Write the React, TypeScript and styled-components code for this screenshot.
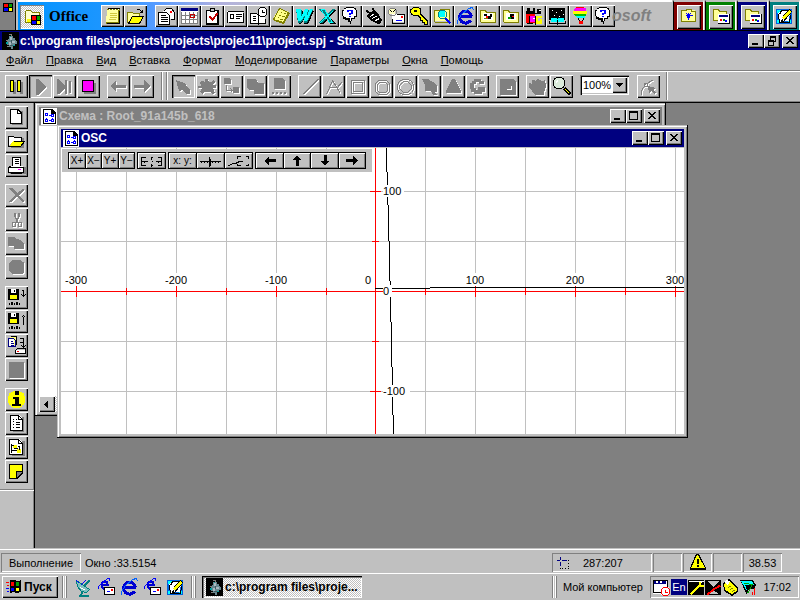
import React from "react";
import styled, { createGlobalStyle, css } from "styled-components";

/* ---------- theme ---------- */
const face = "#c0c0c0";
const shade = "#808080";
const navy = "#000080";
const sans = `"Liberation Sans", Arial, sans-serif`;

const raised = css`
  box-shadow: inset 1px 1px #fff, inset -1px -1px #000, inset -2px -2px ${shade};
`;
const sunken = css`
  box-shadow: inset 1px 1px ${shade}, inset -1px -1px #fff;
`;
const dither = css`
  background: conic-gradient(#fff 25%, ${face} 0 50%, #fff 0 75%, ${face} 0) 0 0 / 2px 2px;
`;

const Global = createGlobalStyle`
  * { box-sizing: border-box; }
  body { margin: 0; font: 11px/14px ${sans}; color: #000; background: ${face}; overflow: hidden; }
  button, select { font: inherit; color: inherit; border: 0; margin: 0; padding: 0; border-radius: 0; }
  svg { display: block; flex: none; shape-rendering: crispEdges; }
`;

/* ---------- icon drawings: [kind, colour, path]; f = fill, s / w / b = 1, 2, 3 px stroke ---------- */
type Part = ["f" | "s" | "w" | "b", string, string];
const strokeWidths = { f: 0, s: 1, w: 2, b: 3 };
const Y = "#ffff00";
const K = "#000000";
const W = "#ffffff";
const G = "#808080";
const B = "#0000ff";
const C = "#00ffff";
const R = "#ff0000";
const T = "#008080";
const O = "#808000";

const folder: Part[] = [
  ["f", "#ffff99", "M2 2h5l1 2h7v10H2z"],
  ["s", O, "M2 2h5l1 2h7v9H2z"],
];
const bubble: Part[] = [
  ["f", K, "M5 0h8v1h2v2h1v7h-2v2h-3v2h-1v3H9v-2H7v-2H4v-1H2V9H1V3h2V1h2z"],
  ["f", W, "M5 1h8v1h1v1h1v6h-2v2h-3v3H9v-3H5v-1H3V9H2V4h1V2h2z"],
  ["f", B, "M6 3h6v4h-2v1H8V6h2V4H8v1H6zM8 9h2v1H8z"],
];
const ie: Part[] = [
  ["b", "#0000d0", "M15 9A6 6 0 1 0 14 13M4 9h11"],
  ["s", "#0060ff", "M1 16V13L5 7L12 1L16 0L17 3"],
];
const winDoc: Part[] = [
  ["f", K, "M2 1h9l4 4v11H2z"],
  ["f", W, "M3 2h7v4h4v9H3z"],
  ["s", B, "M4 5h2v2H4zM10 6h2v2h-2zM4 11h2v2H4zM10 11h2v2h-2zM7 7h2M7 12h2M5 9v1M11 9v1"],
];
const disk: Part[] = [
  ["f", K, "M1 1h11v11H1z"],
  ["f", W, "M4 1h5v4H4z"],
  ["f", K, "M7 2h1v2H7z"],
  ["f", Y, "M3 7h7v4H3z"],
  ["s", K, "M2 14v2M4 14h1v2H4zM7 14v2M9 14h1v2H9zM12 14v2"],
];
const pad: Part[] = [
  ["f", "#0060e0", "M1 2h16v15H1z"],
  ["f", C, "M2 3h4v3H2zM2 13h3v3H2zM13 13h3v3h-3z"],
  ["f", W, "M6 3L15 5L14 14L4 15L3 7z"],
  ["s", K, "M4 7l2-4h7M3 7l1 8h10l1-7M7 12l-1 2h2l8-10-2-2-8 9"],
  ["f", Y, "M7 11L14 3l2 2-7 8z"],
];
const appFolder: Part[] = [
  ...folder,
  ["f", K, "M7 7h12v10H7z"],
  ["f", W, "M7 7h11v9H7z"],
  ["f", navy, "M8 8h9v2H8z"],
  ["f", R, "M9 12h2v2H9z"],
  ["f", "#008000", "M12 12h2v2h-2z"],
  ["f", B, "M14 13h2v2h-2z"],
];

const art: Record<string, Part[]> = {
  flag: [
    ["f", K, "M0 0h10v9H0z"],
    ["f", R, "M1 1h4v3H1z"],
    ["f", "#00a000", "M6 1h3v3H6z"],
    ["f", B, "M1 5h4v3H1z"],
    ["f", Y, "M6 5h3v3H6z"],
  ],
  office: [
    ["f", "#ffffcc", "M3 3h5l2 2h7v10H3z"],
    ["s", O, "M3 3h5l2 2h7v4M3 3v12h6"],
    ["f", Y, "M5 12h4v3H5z"],
    ["f", K, "M9 8h10v10H9z"],
    ["f", R, "M10 9h4v4h-4z"],
    ["f", "#00a000", "M15 9h3v4h-3z"],
    ["f", B, "M10 14h4v3h-4z"],
    ["f", Y, "M15 14h3v3h-3z"],
  ],
  notes: [
    ["f", O, "M4 2h13v15H3z"],
    ["f", "#ffffa0", "M4 3h11v12H3z"],
    ["s", K, "M4 1h12M16 3v13H3"],
    ["s", "#d0c840", "M6 6h7M6 8h7M6 10h7M5 12h7"],
    ["s", W, "M5 2h1M8 2h1M11 2h1M14 2h1"],
  ],
  open: [
    ["f", "#ffffa0", "M1 5h5l1 1h6v3H6l-4 7H1z"],
    ["f", Y, "M6 9h12l-5 7H2z"],
    ["s", O, "M1 15V5h5l1 1h6v3"],
    ["s", K, "M6 9h11l-4 7H2zM10 2h3l3 3M16 2v3h-3"],
  ],
  letter: [
    ["f", W, "M6 4l3-3h5l3 4v7H6z"],
    ["s", K, "M6 4l3-3h5l3 4v7h-4"],
    ["f", W, "M1 5h8l3 3v9H1z"],
    ["s", K, "M1 5h8l3 3v9H1zM3 8h5M3 10h7M3 12h7M3 14h7"],
    ["f", R, "M13 4h2v2h-2z"],
  ],
  calendar: [
    ["f", W, "M1 1h17v15H1z"],
    ["f", navy, "M1 1h17v3H1z"],
    ["s", G, "M1 4v12h16V4M5 4v12M9 4v12M13 4v12M1 8h16M1 12h16"],
    ["s", "#c00000", "M10 7h4v3h-4z"],
  ],
  check: [
    ["f", K, "M3 3h13v15H3z"],
    ["f", W, "M4 4h10v12H4z"],
    ["f", "#c0c0c0", "M7 1h4v3H7z"],
    ["s", K, "M7 1h4v3H7z"],
    ["w", "#c00000", "M6 9l3 3l5-6"],
  ],
  card: [
    ["f", W, "M1 4h16v11H1z"],
    ["s", K, "M1 4h16M1 4v11M17 5v10M2 15h15M4 7h3v4H4zM9 7h6M9 9h6M9 11h4"],
  ],
  bookClock: [
    ["f", W, "M1 7h7l1 1 7-1v9H1z"],
    ["s", K, "M1 6h6l2 2v9l-1-1H1zM9 17l1-1h6v-5M3 9h3M3 11h3M3 13h3"],
    ["f", W, "M10 1h6v1h1v7h-7z"],
    ["s", K, "M11 0h4l2 2v5l-2 2h-4l-2-2V2zM13 2v3h2"],
  ],
  sticky: [
    ["f", O, "M7 3L18 6 12 17 2 14z"],
    ["f", "#ffff88", "M7 1L17 5 11 15 1 12z"],
    ["s", O, "M7 1L16 5 11 15 1 12zM8 5h1M11 6h2M6 8h2M9 9h3M5 10h1M7 12h3"],
  ],
  word: [
    ["f", K, "M3 4h5l-1 8 4-8h3l-1 7 3-7h3l-6 13h-4l1-6-4 6H4z"],
    ["f", T, "M1 3h6l0 8 4-8h3l-1 7 3-7h2l-6 13H9l1-6-4 6H3z"],
    ["f", C, "M1 2h5l0 8 4-8h3l-1 7 3-7h3l-6 12H9l1-6-4 6H3z"],
  ],
  excel: [
    ["f", K, "M2 3h5l3 5 4-5h4l-6 7 6 7h-6l-2-5-4 5H2l6-7z"],
    ["f", T, "M1 2h6l3 5 4-5h3l-6 7 5 7h-5l-2-5-4 5H1l6-7z"],
    ["s", C, "M2 2h4l8 13h-3L3 3M15 3L2 15"],
  ],
  bubble,
  plug: [
    ["w", K, "M2 3l5 4M8 1l3 5"],
    ["f", K, "M4 7l6-4 3 2 5 8-1 3-3 1-8-4-3-3z"],
    ["s", W, "M6 9l4-3M8 11l5-3M11 13l4-2"],
  ],
  schedMail: [
    ["f", W, "M5 7h13v8H5z"],
    ["s", K, "M9 7h8v9H5v-5"],
    ["f", R, "M14 9h2v2h-2z"],
    ["s", B, "M8 13h6"],
    ["f", "#ffffc0", "M2 2h6v5H2z"],
    ["s", G, "M3 1h4l2 2v3L7 8H3L1 6V3z"],
    ["s", K, "M5 5l3-3M5 5L3 3"],
  ],
  key: [
    ["f", K, "M3 0h6v1h2v6l7 7v4h-4v-2h-2v-2h-2v-2L8 9H3V8H1V6H0V2h2V1h1z"],
    ["f", Y, "M3 1h6v1h1v6l7 7v2h-2v-2h-2v-2h-2v-2L8 8H3V7H2V6H1V3h1V2h1z"],
    ["f", K, "M4 3h3v2H4z"],
  ],
  find: [
    ["f", "#ffff99", "M1 3h5l1-1h9v12H1z"],
    ["s", O, "M1 14V3h5l1-1h9v13H1"],
    ["f", C, "M6 4h6v6H6z"],
    ["s", T, "M7 3h4l2 2v4l-2 2H7L5 9V5z"],
    ["w", B, "M12 11l5 5"],
  ],
  ie,
  imgA: [
    ["f", "#ffff99", "M1 3h5l1 2h9v10H1z"],
    ["s", O, "M1 14V3h5l1 2h9v10H1"],
    ["f", W, "M4 6h10v7H4z"],
    ["f", K, "M5 7h3v2H5zM9 9h3v3H9zM11 7h2v3h-2z"],
    ["f", R, "M7 9h2v2H7z"],
    ["f", O, "M5 11h4v1H5z"],
  ],
  imgB: [
    ["f", "#ffff99", "M1 3h5l1 2h9v10H1z"],
    ["s", O, "M1 14V3h5l1 2h9v10H1"],
    ["f", W, "M4 6h10v7H4z"],
    ["f", K, "M8 7h4v3H8zM9 10h3v2H9z"],
    ["f", "#00a000", "M6 10h3v2H6z"],
    ["f", R, "M10 9h2v1h-2z"],
  ],
  fruit: [
    ["f", R, "M1 6h9v10H1z"],
    ["f", K, "M2 1h3v3h3V1h2v5h2V2h4v5H1V4h1z"],
    ["f", "#ff00ff", "M5 9h5v6H5z"],
    ["f", Y, "M11 9h6v2h-4v3h2v-2h2v5h-6z"],
    ["s", K, "M4 8v8M10 8v9M1 16h6"],
    ["s", W, "M7 11h2M13 3h2"],
  ],
  stars: [
    ["f", K, "M1 1h16v12H1z"],
    ["s", W, "M3 3h1M7 5h1M12 3h1M5 8h1M14 7h1M10 9h1"],
    ["f", C, "M3 11h5l1 1 1-1h6v4h-6l-1 1-1-1H3z"],
    ["s", K, "M1 13v3h7l1 1 1-1h7v-3M9 12v4"],
  ],
  balloon: [
    ["f", R, "M6 0h7v2H4V1z"],
    ["f", "#ff00ff", "M4 1h11v3H3z"],
    ["f", Y, "M2 4h14v3H2z"],
    ["f", "#00c000", "M3 7h12v2H4z"],
    ["f", C, "M5 9h9v2H6z"],
    ["s", K, "M7 11l1 3M12 11l-1 3"],
    ["f", R, "M8 14h4v3H8z"],
  ],
  starFolder: [
    ["f", "#ffff99", "M2 3h14v11H2z"],
    ["s", O, "M2 3h5v-1h5v2h4v10H2z"],
    ["s", B, "M9 5v7M6 8h7M7 6l4 5M11 6l-4 5"],
  ],
  appFolder,
  pad,
  mascot: [
    ["f", K, "M0 0h18v18H0z"],
    ["f", "#688890", "M7 4h4v2h2l1 3h1v3h-2v2h-2v3H9v-2H7v-2H5V9l1-2h1z"],
    ["f", "#a8b8c0", "M8 5h2v3H8zM10 9h3v2h-3zM7 10h2v3H7z"],
    ["s", G, "M9 1v3M6 2h2M4 14h2M3 8h2"],
    ["f", "#00a0a0", "M4 10h2v2H4zM11 13h2v1h-2zM8 4h1v1H8z"],
    ["f", "#405860", "M9 8h1v3H9zM8 13h3v1H8z"],
  ],
  pause: [
    ["f", G, "M6 5h3v12H6zM13 5h3v12h-3z"],
    ["f", K, "M3 3h4v12H3zM10 3h4v12h-4z"],
    ["f", Y, "M4 4h2v10H4zM11 4h2v10h-2z"],
  ],
  stop: [
    ["f", G, "M5 6h12v11H5z"],
    ["f", K, "M3 3h12v12H3z"],
    ["f", "#ff00ff", "M4 4h10v10H4z"],
  ],
  play: [["f", G, "M5 2h2l8 8-8 8H5z"]],
  step: [
    ["f", G, "M2 2h2l6 7V3h2v14h-2v-5l-6 5H2z"],
    ["f", G, "M14 4h2v12h-2z"],
  ],
  left: [["f", G, "M1 9l6-6v5h10v3H7v4z"]],
  right: [["f", G, "M17 9l-6-6v5H1v3h10v4z"]],
  arrow: [["f", G, "M2 3l8 3 2 1v1l4 5v4h-4l-4-4-3 1z"]],
  cog: [["f", G, "M7 2h3l1 3h2l3-2 1 2-2 3h3v3h-3l2 5-3 1-2-2H7l-3 2-2-2 2-4H0V9h3L2 5l2-1 3 1z"]],
  link: [
    ["f", G, "M2 1h6l1 2v4H2zM11 10h6v6h-6z"],
    ["s", G, "M4 7v6h5M8 11l2 2-2 2"],
  ],
  merge: [["f", G, "M1 2h9l2 4h6v11H8v-4H3L1 11z"]],
  dots: [["f", G, "M4 1h8l3 3v8H4zM2 15h2v2H2zM6 15h2v2H6zM10 15h2v2h-2zM14 15h2v2h-2z"]],
  line: [["s", G, "M2 17L17 2"], ["s", G, "M3 17L18 2"]],
  polyline: [["s", G, "M2 17L8 3l8 13M4 10h9l4-5"]],
  rect: [["s", G, "M3 3h13v13H3z"], ["s", G, "M5 5h9v9H5z"]],
  round: [["s", G, "M6 3h8l3 3v8l-3 3H6l-3-3V6z"], ["s", G, "M7 5h6l2 2v6l-2 2H7l-2-2V7z"]],
  circle: [["s", G, "M6 2h6l3 2 2 3v5l-2 3-3 2H6l-3-2-2-3V7l2-3z"], ["s", G, "M7 4h4l4 4v3l-4 4H7l-4-4V8z"]],
  swan: [["f", G, "M2 2h6l5 3 4 4v6h-2l2 3h-4l-2-4H5V8z"]],
  tri: [["f", G, "M8 2h3l6 12v2H2v-2z"]],
  gee: [["f", G, "M6 2h7v2h3v3h-5V5H8v2H6v4h2v2h2v-3h7v5h-3v2H6v-2H3v-3H2V6h2V4h2z"]],
  sheet: [["f", G, "M2 2h14l2 3v13H2z"], ["s", W, "M8 12h5V8"]],
  hand: [["f", G, "M1 6l3 1V3h3v2l2-3 3 1 2 1 3-1 1 6-2 7v2H7l-3-4-3-3z"]],
  lens: [
    ["b", K, "M12 11l6 6"],
    ["f", K, "M4 0h6v1h2v2h1v6h-1v2h-2v1H4v-1H2V9H1V3h1V1h2z"],
    ["f", "#dcecdc", "M4 1h6v1h1v1h1v6h-1v1h-1v1H4v-1H3V9H2V3h1V2h1z"],
    ["s", W, "M4 5V4L6 3"],
    ["s", Y, "M13 12l4 4"],
  ],
  curve: [
    ["s", G, "M2 17v-4l4-6 8-5M5 6h3v3H5z"],
    ["s", G, "M8 8l8 8"],
    ["f", G, "M9 9l8 2-3 2 3 3-2 1-3-3-2 3z"],
  ],
  page: [
    ["f", G, "M5 3h11v14H5z"],
    ["f", K, "M3 1h8l4 4v11H3z"],
    ["f", W, "M4 2h6v4h4v9H4z"],
    ["f", W, "M11 3l2 2h-2z"],
  ],
  fold: [
    ["f", G, "M4 6h13v10H4z"],
    ["f", W, "M2 4h4l1 1h7v4H6l-4 5z"],
    ["s", K, "M1 14V4h5l1 1h7v3"],
    ["f", Y, "M6 9h12l-5 6H2z"],
    ["s", K, "M6 9h11l-4 5H1"],
  ],
  print: [
    ["f", G, "M3 11h16v7H3z"],
    ["f", W, "M5 1h8v9H5z"],
    ["s", K, "M5 1h8v9H5zM7 3h4M7 5h4M7 7h4"],
    ["f", W, "M2 10h14v6H2z"],
    ["s", K, "M1 11l3-2M1 11h15v5H1zM3 17h11"],
    ["f", "#ff00ff", "M11 13h3v1h-3z"],
  ],
  cross: [["f", G, "M2 2h3l5 5 6-4 1 1-5 5 5 6-1 1-6-5-6 5H2l6-7z"]],
  cut: [
    ["s", G, "M7 2v4l4 6M12 2v4l-4 6M9 7v5M5 12h3v4H5zM11 12h3v4h-3z"],
    ["s", G, "M8 2v4M11 2v4M10 7v5"],
  ],
  copy: [["f", G, "M1 3h6l3 2 4 1 3 4v5H7v-3H1z"]],
  paste: [["f", G, "M5 2h8l2 2h2v10l-2 2H5l-3-3V5z"]],
  save: [...disk, ["s", K, "M14 2h2v6M14 6l2 2 2-2"]],
  load: [...disk, ["s", K, "M16 12V4M14 5l2-2 2 2"]],
  export: [
    ["f", "#ffff80", "M3 1h7v8H3z"],
    ["s", K, "M3 0h6v8"],
    ["f", W, "M1 3h6v8H1z"],
    ["s", navy, "M1 2h5l2 2v6H1zM3 5h2M3 7h3M3 9h3"],
    ["s", K, "M12 2h4v9M14 9l2 2 2-2M12 6h3M8 14l2-2h8v5H8z"],
    ["f", W, "M9 14h9v3H9z"],
    ["f", R, "M10 15h2v1h-2z"],
  ],
  blank: [["f", G, "M2 2h15v16H2z"]],
  info: [
    ["f", Y, "M6 1h7v1h2v1h2v3h1v7h-1v2h-2v2h-2v1H6v-1H4v-2H2v-2H1V6h1V3h2V2h2z"],
    ["f", K, "M8 1h4v4H8zM6 7h6v7h2v2H5v-2h3V9H6z"],
  ],
  list: [
    ["f", G, "M6 3h11v15H6z"],
    ["f", W, "M3 1h9l3 3v12H3z"],
    ["s", K, "M3 1h8l4 4v11H3zM11 1v4h4M5 5h1M8 5h1M5 7h1M8 8h4M5 10h1M8 10h4M5 13h1M8 13h4"],
  ],
  tree: [
    ["f", G, "M5 3h13v15H5z"],
    ["f", W, "M2 1h10l3 3v12H2z"],
    ["f", Y, "M6 7h4v3H6zM10 11h4v4h-4z"],
    ["s", K, "M2 1h9l4 4v11H2zM11 1v4h4M4 5v9M4 7h2M4 12h5M10 8h2v3M6 10h4"],
  ],
  note: [
    ["f", K, "M2 2h14v10l-6 5H2z"],
    ["f", Y, "M3 3h12v6H9v7H3z"],
    ["f", G, "M10 10h5l-5 5z"],
  ],
  winDoc,
  start: [
    ["f", K, "M6 2h4l4 1 3-1v12l-4 1-4-1-3 1z"],
    ["f", R, "M7 4h3v4H7z"],
    ["f", "#00a000", "M12 4h3v4h-3z"],
    ["f", B, "M7 10h3v3H7z"],
    ["f", Y, "M12 10h3v3h-3z"],
    ["s", R, "M1 4h3M2 7h2"],
    ["s", B, "M1 10h3M2 13h2"],
  ],
  dish: [
    ["f", "#80c0c0", "M2 2l13 9-3 3-6-1-3-5z"],
    ["s", T, "M2 2l1 6 4 5 5 1 3-3M2 2l13 9"],
    ["w", T, "M8 14l-2 3h8"],
    ["s", B, "M6 7l5-5M2 2l3 3"],
    ["w", T, "M10 7l5-5"],
    ["s", W, "M6 9l5 3"],
  ],
  ieMail: [
    ["w", "#0000d0", "M10 9L9 10H6L4 8V5L6 3H9L10 6H4"],
    ["s", B, "M1 10V8L10 0H12V2"],
    ["f", W, "M7 9h10v7H7z"],
    ["s", K, "M7 9h10v7H7z"],
    ["f", R, "M14 11h2v2h-2z"],
    ["s", B, "M9 13h3"],
  ],
  sel: [
    ["s", navy, "M0 4h3M5 4h5M4 0v3M4 5v4"],
    ["s", K, "M11 4h1M12 6v1M12 9v1M12 12h-1M9 12H8M6 12H5M4 11v1"],
  ],
  warn: [
    ["f", K, "M7 0h3l7 14v2H1v-2z"],
    ["f", Y, "M8 1h1l7 13H2z"],
    ["f", K, "M8 5h2v5H8zM8 11h2v2H8z"],
  ],
  trayCal: [
    ["f", W, "M0 1h14v14H0z"],
    ["s", K, "M0 1h14v12H0z"],
    ["f", navy, "M1 2h12v3H1z"],
    ["f", W, "M3 2h2v2H3zM7 2h2v2H7zM8 8h8v8H8z"],
    ["s", R, "M10 8h4l2 2v4l-2 2h-4l-2-2v-4zM12 10v3h2"],
  ],
  trayTool: [
    ["f", K, "M0 1h16v15H0z"],
    ["s", W, "M0 2h15M1 15L14 2"],
    ["w", Y, "M2 15L12 5M11 2v4h4"],
  ],
  trayCut: [
    ["f", K, "M0 1h16v15H0z"],
    ["f", face, "M2 2h12l-6 6zM4 15l4-4 6 4z"],
    ["w", R, "M2 15l6-5 7-4"],
  ],
  trayPhone: [
    ["f", K, "M1 4l6-4 4 4 5 4v5l-6 4-8-5z"],
    ["f", Y, "M2 5l5-3 3 3 5 4v3l-5 3-7-4z"],
    ["f", W, "M4 1l4 1-2 4-3-2z"],
    ["s", O, "M6 8l3-2M8 10l3-2M10 12l3-2"],
  ],
  trayNet: [
    ["f", K, "M0 1h13l3 5-2 4H9l-2 6z"],
    ["f", C, "M1 2h11l2 4H5l3 8z"],
    ["s", "#00a000", "M4 4l8 1-5 9"],
    ["s", R, "M14 8v7M12 12v3"],
  ],
};

function Parts({ list, tint }: { list: Part[]; tint?: string }) {
  return (
    <>
      {list.map(([kind, color, d], i) =>
        kind === "f" ? (
          <path key={i} d={d} fill={tint ?? color} />
        ) : (
          <path
            key={i}
            d={d}
            fill="none"
            stroke={tint ?? color}
            strokeWidth={strokeWidths[kind]}
            transform="translate(0.5 0.5)"
          />
        )
      )}
    </>
  );
}

function Icon({ name, off, w = 19, h = 19 }: { name: string; off?: boolean; w?: number; h?: number }) {
  return (
    <svg width={w} height={h} viewBox={`0 0 ${w} ${h}`} aria-hidden="true">
      {off && (
        <g transform="translate(1 1)">
          <Parts list={art[name]} tint={W} />
        </g>
      )}
      <Parts list={art[name]} />
    </svg>
  );
}

/* ---------- shell ---------- */
const Screen = styled.div`
  display: flex;
  flex-direction: column;
  width: 100%;
  height: 100vh;
  background: ${face};
`;

/* ---------- office shortcut bar ---------- */
const OfficeBar = styled.header`
  display: flex;
  height: 31px;
  border-bottom: 1px solid #000;
  overflow: hidden;
`;
const OfficeHandle = styled.div`
  width: 16px;
  padding: 3px;
  background: ${shade};
  border-right: 1px solid #000;
`;
const OfficeBand = styled.div`
  display: flex;
  flex: 1;
  align-items: flex-start;
  margin-left: 2px;
  border-top: 2px solid #fff;
  background: linear-gradient(90deg, #0094ff 0, #1e96ff 90px, #5a9cff 140px, #b0b0e0 200px, ${face} 270px);
`;
const OfficeMenu = styled.button`
  ${dither}
  width: 24px;
  height: 24px;
  margin: 3px 0 0 2px;
  padding: 2px;
  box-shadow: inset 1px 1px ${shade}, inset -1px -1px #fff;
`;
const OfficeName = styled.span`
  width: 57px;
  padding: 5px 0 0 5px;
  font: bold 15px/18px "Liberation Serif", serif;
`;
const ShortcutGroup = styled.div`
  display: flex;
  margin: 3px 8px 0 0;
`;
const Shortcut = styled.button`
  ${raised}
  width: 23px;
  height: 22px;
  padding: 2px;
  background: ${face};
  overflow: hidden;
`;
const Brand = styled.span`
  flex: 1;
  margin-left: -11px;
  padding-top: 5px;
  color: ${shade};
  font: italic bold 16px/18px ${sans};
`;
const Tile = styled.div<{ $color: string }>`
  width: 31px;
  margin-left: 1px;
  padding: 3px 2px 0 3px;
  border-left: 1px solid #000;
  border-right: 1px solid #fff;
  border-top: 2px solid ${face};
  background: ${(p) => p.$color};
`;
const TileButton = styled.button`
  ${raised}
  display: block;
  width: 24px;
  height: 24px;
  padding: 2px;
  background: ${face};
`;

/* ---------- title bars ---------- */
const TitleBar = styled.div<{ $active?: boolean; $main?: boolean }>`
  display: flex;
  flex: none;
  align-items: center;
  height: ${(p) => (p.$main ? 19 : 18)}px;
  padding: 0 2px;
  background: ${(p) => (p.$active ? navy : shade)};
  color: ${(p) => (p.$active ? "#fff" : face)};
  font-size: 12px;
  font-weight: bold;
`;
const TitleText = styled.span<{ $tight?: boolean }>`
  flex: 1;
  padding-left: ${(p) => (p.$tight ? 1 : 2)}px;
  white-space: nowrap;
`;
const DocIcon = styled.span`
  background: #fff;
`;
const CaptionButton = styled.button<{ $apart?: boolean }>`
  ${raised}
  width: 16px;
  height: 14px;
  margin-left: ${(p) => (p.$apart ? 2 : 0)}px;
  padding: 2px;
  background: ${face};
`;

const captionShapes: Record<string, string> = {
  Minimize: "M2 7h6v2H2z",
  Maximize: "M1 0h9v9H1zM2 2v6h7V2z",
  Restore: "M4 0h6v6H8v4H2V4h2zM5 2v2h3v1h1V2zM3 6v3h4V6z",
  Close: "M2 1h2v1h1v1h2V2h1V1h2v1H9v1H8v1H7v1h1v1h1v1h1v1H8V7H7V6H5v1H4v1H2V7h1V6h1V5h1V4H4V3H3V2H2z",
};
function Caption({ kinds }: { kinds: string[] }) {
  return (
    <>
      {kinds.map((k) => (
        <CaptionButton key={k} $apart={k === "Close"} aria-label={k}>
          <svg width="12" height="10" viewBox="0 0 12 10">
            <path d={captionShapes[k]} fillRule="evenodd" />
          </svg>
        </CaptionButton>
      ))}
    </>
  );
}

/* ---------- menu and toolbar ---------- */
const MenuBar = styled.nav`
  display: flex;
  gap: 13px;
  height: 21px;
  padding: 3px 6px;
  border-bottom: 1px solid ${shade};
`;
const MenuItem = styled.button`
  background: none;
  white-space: nowrap;
`;
const ToolBar = styled.div`
  display: flex;
  align-items: flex-start;
  height: 32px;
  padding: 3px 5px 0;
  border-top: 1px solid #fff;
  border-bottom: 1px solid #000;
  box-shadow: inset 0 -1px ${shade};
`;
const ToolGroup = styled.div<{ $vertical?: boolean }>`
  display: flex;
  flex-direction: ${(p) => (p.$vertical ? "column" : "row")};
  gap: 1px;
  margin: ${(p) => (p.$vertical ? "0 0 7px" : "0 7px 0 0")};
`;
const ToolButton = styled.button<{ $pressed?: boolean }>`
  width: 23px;
  height: 23px;
  padding: 2px;
  background: ${face};
  overflow: hidden;
  ${(p) =>
    p.$pressed
      ? css`
          box-shadow: inset 1px 1px #000, inset 2px 2px ${shade}, inset -1px -1px #fff;
        `
      : raised}
`;
const Ridge = styled.div`
  flex: none;
  width: 6px;
  height: 28px;
  margin: -3px 5px 0 0;
  border: 0 solid ${shade};
  border-width: 0 1px;
  box-shadow: inset 1px 0 #fff, 1px 0 #fff;
`;
const BarEnd = styled.div`
  flex: none;
  width: 2px;
  height: 28px;
  margin: -3px 0 0 -1px;
  border-left: 1px solid ${shade};
  border-right: 1px solid #fff;
`;
const Combo = styled.label`
  display: flex;
  width: 49px;
  height: 20px;
  margin-right: 8px;
  padding: 2px;
  background: #fff;
  box-shadow: inset 1px 1px ${shade}, inset 2px 2px #000, inset -1px -1px #fff, inset -2px -2px ${face};
`;
const ComboSelect = styled.select`
  appearance: none;
  flex: 1;
  width: 30px;
  padding-left: 1px;
  background: transparent;
`;
const ComboArrow = styled.span`
  ${raised}
  width: 15px;
  padding: 6px 4px;
  background: ${face};
`;

/* ---------- work area ---------- */
const Work = styled.div`
  display: flex;
  flex: 1;
  min-height: 0;
`;
const Side = styled.aside`
  width: 35px;
  border-right: 1px solid #000;
  box-shadow: inset -1px 0 ${shade};
`;
const Dock = styled.div`
  height: 387px;
  padding: 3px 5px 0;
  border-bottom: 1px solid ${shade};
  box-shadow: 0 1px #fff;
`;
const Desk = styled.main`
  position: relative;
  flex: 1;
  background: ${shade};
  overflow: hidden;
`;
const Window = styled.section<{ $x: number; $y: number; $w: number; $h: number }>`
  position: absolute;
  left: ${(p) => p.$x}px;
  top: ${(p) => p.$y}px;
  width: ${(p) => p.$w}px;
  height: ${(p) => p.$h}px;
  display: flex;
  flex-direction: column;
  padding: 4px;
  background: ${face};
  box-shadow: inset -1px -1px #000, inset 1px 1px ${face}, inset 2px 2px #fff, inset -2px -2px ${shade};
`;
const Canvas = styled.div`
  position: relative;
  flex: 1;
  min-height: 0;
  margin-top: 1px;
  background: #fff;
  overflow: hidden;
`;
const ScrollRow = styled.div`
  ${dither}
  height: 16px;
`;
const ScrollButton = styled.button`
  ${raised}
  width: 16px;
  height: 16px;
  padding: 4px 5px;
  background: ${face};
`;
const ScopeTools = styled.div`
  position: absolute;
  left: 1px;
  top: 1px;
  display: flex;
  gap: 2px;
  padding: 3px 6px;
  background: ${face};
`;
const ScopeGroup = styled.div`
  display: flex;
  border: 1px solid #000;
  background: #000;
  gap: 1px;
`;
const ScopeButton = styled.button<{ $w: number }>`
  display: flex;
  align-items: center;
  justify-content: center;
  width: ${(p) => p.$w}px;
  height: 15px;
  background: ${face};
  box-shadow: inset 1px 1px #fff, inset -1px -1px ${shade};
  font-size: 10px;
  white-space: nowrap;
`;

const scopeGlyphs: Record<string, string> = {
  Fit: "M5 2H1v8h4M1 6h6M4 5v2M11 1v3M11 8v3M10 2h2M10 10h2M11 6h1M17 2h4v8h-4M15 6h6M18 5v2",
  Axes: "M0 6h21M10 1v10M11 3v7M2 5v2M5 5v2M8 5v2M13 5v2M16 5v2M19 5v2",
  Frame: "M0 10h2l3-2h3l4-2h3M10 3V1h3M18 1h3v2M21 8v2h-3M13 10h-3V8",
};
const arrows: Record<string, string> = {
  Left: "M5 6l5-5v3h7v3h-7v3z",
  Up: "M11 0l4 5h-2v6h-3V5H7z",
  Down: "M11 11l4-5h-2V0h-3v6H7z",
  Right: "M17 6l-5-5v3H5v3h7v3z",
};

/* ---------- plot ---------- */
const Plot = styled.svg`
  font: 11px ${sans};
`;
const columns = [-300, -250, -200, -150, -100, -50, 50, 100, 150, 200, 250, 300];
const rows = [100, 50, -50, -100];
const px = (v: number) => (v < 0 ? 315 : 314) + v;
const py = (v: number) => 143 - v;

function Scope() {
  return (
    <Plot width="623" height="286" viewBox="0 0 623 286" role="img" aria-label="OSC">
      {columns.map((v) => (
        <rect key={v} x={px(v)} y="0" width="1" height="286" fill={face} />
      ))}
      {rows.map((v) => (
        <rect key={v} x="0" y={py(v)} width="623" height="1" fill={face} />
      ))}
      <g fill={R}>
        <rect x="0" y="143" width="623" height="1" />
        <rect x="314" y="0" width="1" height="286" />
        {columns.map((v) => (
          <rect key={v} x={px(v)} y={v % 100 ? 140 : 138} width="1" height={v % 100 ? 7 : 11} />
        ))}
        {rows.map((v) => (
          <rect key={v} x={v % 100 ? 311 : 309} y={py(v)} width={v % 100 ? 7 : 11} height="1" />
        ))}
      </g>
      <path
        d="M325 0h1v24h-1zM326 24h1v33h-1zM327 57h1v36h-1zM328 93h1v40h-1zM329 133h1v41h-1zM330 174h1v45h-1zM331 219h1v48h-1zM332 267h1v19h-1zM314 140h55v1h-55zM369 139h254v1h-254z"
        fill={K}
      />
      {[-300, -200, -100, 0, 100, 200, 300].map((v) => {
        const digits = `${v}`.length;
        const x = v === 0 ? 307 : px(v);
        return (
          <g key={v}>
            <rect x={x - digits * 3 - 1} y="125" width={digits * 6 + 2} height="13" fill={W} />
            <text x={x} y="136" textAnchor="middle">
              {v}
            </text>
          </g>
        );
      })}
      {[100, 0, -100].map((v) => (
        <g key={v}>
          <rect x="322" y={py(v) - 6} width={`${v}`.length * 6 + 3} height="12" fill={W} />
          <text x="322" y={py(v) + 4}>
            {v}
          </text>
        </g>
      ))}
    </Plot>
  );
}

/* ---------- status bar and taskbar ---------- */
const StatusBar = styled.footer`
  display: flex;
  align-items: center;
  gap: 1px;
  height: 25px;
  padding: 3px 18px 0 1px;
  border-top: 1px solid ${face};
  box-shadow: inset 0 1px #fff;
`;
const StatusCell = styled.div<{ $w: number; $start?: boolean }>`
  ${sunken}
  display: flex;
  align-items: center;
  justify-content: ${(p) => (p.$start ? "flex-start" : "center")};
  gap: 13px;
  width: ${(p) => p.$w}px;
  height: 19px;
  padding: 0 4px;
`;
const StatusText = styled.span`
  flex: 1;
  padding-left: 3px;
`;
const TaskBar = styled.footer`
  display: flex;
  align-items: center;
  height: 27px;
  padding: 0 1px 0 2px;
  border-top: 1px solid #fff;
`;
const StartButton = styled.button`
  ${raised}
  display: flex;
  align-items: center;
  gap: 2px;
  width: 56px;
  height: 22px;
  padding-left: 2px;
  background: ${face};
  font-weight: bold;
  font-size: 12px;
`;
const Grip = styled.div`
  width: 7px;
  height: 22px;
  margin: 0 4px;
  border-left: 1px solid ${shade};
  box-shadow: inset 1px 0 #fff, inset -2px 0 ${face}, inset -3px 0 ${shade}, inset -4px 0 #fff;
`;
const QuickLaunch = styled.div`
  display: flex;
  gap: 4px;
  padding-left: 1px;
  margin-right: 2px;
`;
const QuickButton = styled.button`
  width: 19px;
  height: 19px;
  background: none;
`;
const TaskButton = styled.button`
  ${dither}
  display: flex;
  align-items: center;
  gap: 2px;
  width: 160px;
  height: 22px;
  padding: 2px 4px;
  box-shadow: inset 1px 1px #000, inset 2px 2px ${shade}, inset -1px -1px #fff;
  font-size: 12px;
  font-weight: bold;
  white-space: nowrap;
`;
const Spacer = styled.div`
  flex: 1;
`;
const Tray = styled.div`
  ${sunken}
  display: flex;
  align-items: center;
  gap: 1px;
  width: 149px;
  height: 22px;
  margin-left: 7px;
  padding: 0 8px 0 3px;
`;
const Lang = styled.span`
  width: 16px;
  background: ${navy};
  color: #fff;
  line-height: 16px;
  text-align: center;
`;
const Clock = styled.time`
  flex: 1;
  text-align: right;
`;

/* ---------- content ---------- */
const shortcuts = [
  "letter", "calendar", "check", "card", "bookClock", "sticky", "word", "excel", "bubble", "plug",
  "schedMail", "key", "find", "ie", "imgA", "imgB", "fruit", "stars", "balloon", "bubble",
];
const tiles: [string, string][] = [
  ["#800000", "starFolder"],
  ["#008000", "appFolder"],
  ["#000080", "appFolder"],
  ["#008080", "pad"],
];
const menus = ["Файл", "Правка", "Вид", "Вставка", "Формат", "Моделирование", "Параметры", "Окна", "Помощь"];
const colored = new Set(["pause", "stop", "lens"]);
const toolsA = [["pause", "play", "step", "stop"], ["left", "right"]];
const toolsB = [
  ["arrow", "cog", "link", "merge", "dots"],
  ["line", "polyline", "rect", "round", "circle", "swan", "tri", "gee"],
  ["sheet"],
  ["hand", "lens"],
];
const dockTools = [
  ["page", "fold", "print"],
  ["cross", "cut", "copy", "paste"],
  ["save", "load", "export", "blank"],
  ["info", "list", "tree", "note"],
];
const dockOff = new Set(["cross", "cut", "copy", "paste", "blank"]);

function Tools({ names }: { names: string[] }) {
  return (
    <ToolGroup>
      {names.map((n) => (
        <ToolButton key={n} aria-label={n} $pressed={n === "play" || n === "arrow"}>
          <Icon name={n} off={!colored.has(n)} />
        </ToolButton>
      ))}
    </ToolGroup>
  );
}

export default function App() {
  return (
    <Screen>
      <Global />
      <OfficeBar>
        <OfficeHandle>
          <Icon name="flag" w={10} h={10} />
        </OfficeHandle>
        <OfficeBand>
          <OfficeMenu aria-label="Office">
            <Icon name="office" w={20} h={20} />
          </OfficeMenu>
          <OfficeName>Office</OfficeName>
          <ShortcutGroup>
            {["notes", "open"].map((n) => (
              <Shortcut key={n} aria-label={n}>
                <Icon name={n} h={18} />
              </Shortcut>
            ))}
          </ShortcutGroup>
          <ShortcutGroup>
            {shortcuts.map((n, i) => (
              <Shortcut key={i} aria-label={n}>
                <Icon name={n} h={18} />
              </Shortcut>
            ))}
          </ShortcutGroup>
          <Brand>osoft</Brand>
        </OfficeBand>
        {tiles.map(([color, name], i) => (
          <Tile key={i} $color={color}>
            <TileButton aria-label={name}>
              <Icon name={name} w={20} h={20} />
            </TileButton>
          </Tile>
        ))}
      </OfficeBar>

      <TitleBar $active $main>
        <Icon name="mascot" w={17} h={18} />
        <TitleText $tight>{"c:\\program files\\projects\\projects\\projec11\\project.spj - Stratum"}</TitleText>
        <Caption kinds={["Minimize", "Restore", "Close"]} />
      </TitleBar>

      <MenuBar>
        {menus.map((m) => (
          <MenuItem key={m}>
            <u>{m[0]}</u>
            {m.slice(1)}
          </MenuItem>
        ))}
      </MenuBar>

      <ToolBar>
        {toolsA.map((g, i) => (
          <Tools key={i} names={g} />
        ))}
        <Ridge />
        {toolsB.map((g, i) => (
          <Tools key={i} names={g} />
        ))}
        <Combo>
          <ComboSelect aria-label="Масштаб" defaultValue="100%">
            <option>100%</option>
          </ComboSelect>
          <ComboArrow>
            <svg width="7" height="4" viewBox="0 0 7 4">
              <path d="M0 0h7v1H6v1H5v1H4v1H3V3H2V2H1V1H0z" />
            </svg>
          </ComboArrow>
        </Combo>
        <Tools names={["curve"]} />
        <BarEnd />
      </ToolBar>

      <Work>
        <Side>
          <Dock>
            {dockTools.map((g, i) => (
              <ToolGroup key={i} $vertical>
                {g.map((n) => (
                  <ToolButton key={n} aria-label={n}>
                    <Icon name={n} off={dockOff.has(n)} />
                  </ToolButton>
                ))}
              </ToolGroup>
            ))}
          </Dock>
        </Side>
        <Desk>
          <Window $x={0} $y={0} $w={631} $h={313}>
            <TitleBar>
              <DocIcon>
                <Icon name="winDoc" w={16} h={17} />
              </DocIcon>
              <TitleText>Схема : Root_91a145b_618</TitleText>
              <Caption kinds={["Minimize", "Maximize", "Close"]} />
            </TitleBar>
            <Canvas />
            <ScrollRow>
              <ScrollButton aria-label="Scroll left">
                <svg width="4" height="7" viewBox="0 0 4 7">
                  <path d="M4 0v7H3V6H2V5H1V4H0V3h1V2h1V1h1V0z" />
                </svg>
              </ScrollButton>
            </ScrollRow>
          </Window>
          <Window $x={22} $y={22} $w={631} $h={313}>
            <TitleBar $active>
              <DocIcon>
                <Icon name="winDoc" w={16} h={17} />
              </DocIcon>
              <TitleText>OSC</TitleText>
              <Caption kinds={["Minimize", "Maximize", "Close"]} />
            </TitleBar>
            <Canvas>
              <Scope />
              <ScopeTools>
                <ScopeGroup>
                  {["X+", "X−", "Y+", "Y−"].map((t, i) => (
                    <ScopeButton key={t} $w={i % 2 ? 15 : 16}>
                      {t}
                    </ScopeButton>
                  ))}
                </ScopeGroup>
                <ScopeGroup>
                  <ScopeButton $w={27} aria-label="Fit">
                    <svg width="23" height="12" viewBox="0 0 23 12">
                      <path d={scopeGlyphs.Fit} fill="none" stroke={K} transform="translate(0.5 0.5)" />
                    </svg>
                  </ScopeButton>
                </ScopeGroup>
                <ScopeGroup>
                  <ScopeButton $w={27}>x: y:</ScopeButton>
                  {["Axes", "Frame"].map((n) => (
                    <ScopeButton key={n} $w={27} aria-label={n}>
                      <svg width="23" height="12" viewBox="0 0 23 12">
                        <path d={scopeGlyphs[n]} fill="none" stroke={K} transform="translate(0.5 0.5)" />
                      </svg>
                    </ScopeButton>
                  ))}
                </ScopeGroup>
                <ScopeGroup>
                  {Object.keys(arrows).map((n, i) => (
                    <ScopeButton key={n} $w={i % 2 ? 26 : 27} aria-label={n}>
                      <svg width="22" height="11" viewBox="0 0 22 11">
                        <path d={arrows[n]} />
                      </svg>
                    </ScopeButton>
                  ))}
                </ScopeGroup>
              </ScopeTools>
            </Canvas>
          </Window>
        </Desk>
      </Work>

      <StatusBar>
        <StatusCell $w={80}>Выполнение</StatusCell>
        <StatusText>Окно :33.5154</StatusText>
        <StatusCell $w={100} $start>
          <Icon name="sel" w={14} h={14} />
          287:207
        </StatusCell>
        <StatusCell $w={29} />
        <StatusCell $w={29}>
          <Icon name="warn" w={18} h={17} />
        </StatusCell>
        <StatusCell $w={29} />
        <StatusCell $w={39}>38.53</StatusCell>
      </StatusBar>

      <TaskBar>
        <StartButton>
          <Icon name="start" w={18} h={18} />
          Пуск
        </StartButton>
        <Grip />
        <QuickLaunch>
          {["dish", "ieMail", "ie", "ieMail", "pad"].map((n, i) => (
            <QuickButton key={i} aria-label={n}>
              <Icon name={n} />
            </QuickButton>
          ))}
        </QuickLaunch>
        <Grip />
        <TaskButton>
          <Icon name="mascot" w={17} h={18} />
          c:\program files\proje...
        </TaskButton>
        <Spacer />
        <Grip />
        Мой компьютер
        <Tray>
          <Icon name="trayCal" w={17} h={17} />
          <Lang>En</Lang>
          <Icon name="trayTool" w={16} h={17} />
          <Icon name="trayCut" w={16} h={17} />
          <Icon name="trayPhone" w={17} h={17} />
          <Icon name="trayNet" w={17} h={17} />
          <Clock>17:02</Clock>
        </Tray>
      </TaskBar>
    </Screen>
  );
}
